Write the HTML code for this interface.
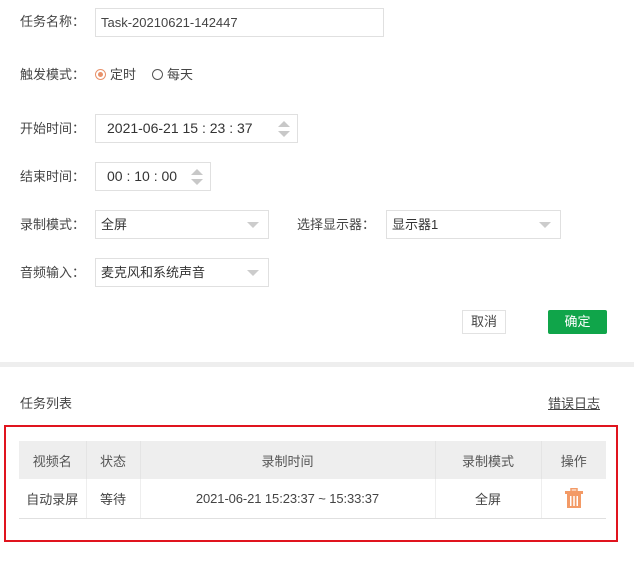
<!DOCTYPE html>
<html><head><meta charset="utf-8"><style>
*{margin:0;padding:0;box-sizing:border-box}
body{width:634px;height:575px;background:#fff;position:relative;overflow:hidden;font-family:"Liberation Sans","Noto Sans CJK SC",sans-serif;font-size:13px;color:#333}
.a{position:absolute}
.lbl{position:absolute;font-size:13px;color:#444;line-height:16px}
.box{position:absolute;border:1px solid #e0e0e0;background:#fff;font-size:13px;color:#333;line-height:27px;padding-left:8px}
.arr{position:absolute;right:9px;top:11px;width:0;height:0;border-left:6px solid transparent;border-right:6px solid transparent;border-top:6px solid #cccccc}
.spin{position:absolute;right:6px;top:5px}
table{border-collapse:collapse;position:absolute;left:19px;top:441px;width:587px;font-size:13px;color:#444}
th{background:#eeeeee;font-weight:normal;height:38px;border-left:1px solid #e4e4e4;color:#555}
td{height:39px;text-align:center;border-bottom:1px solid #e0e0e0;border-left:1px solid #eee}
th:first-child,td:first-child{border-left:none}
</style></head><body>
<div class="lbl" style="left:20px;top:14px">任务名称：</div>
<div class="box" style="left:95px;top:8px;width:289px;height:29px;line-height:27px;padding-left:5px;color:#444">Task-20210621-142447</div>

<div class="lbl" style="left:20px;top:67px">触发模式：</div>
<div class="a" style="left:95px;top:69px;width:11px;height:11px;border:1px solid #e8916a;border-radius:50%"><div style="position:absolute;left:2px;top:2px;width:5px;height:5px;border-radius:50%;background:#e8916a"></div></div>
<div class="lbl" style="left:110px;top:67px">定时</div>
<div class="a" style="left:152px;top:69px;width:11px;height:11px;border:1px solid #555;border-radius:50%"></div>
<div class="lbl" style="left:167px;top:67px">每天</div>

<div class="lbl" style="left:20px;top:121px">开始时间：</div>
<div class="box" style="left:95px;top:114px;width:203px;height:29px;padding-left:11px;font-size:14px">2021-06-21 15 : 23 : 37
<svg class="spin" width="14" height="18" viewBox="0 0 14 18"><path d="M1 7L7 1L13 7Z" fill="#c8c8c8"/><path d="M1 11L7 17L13 11Z" fill="#c8c8c8"/></svg></div>

<div class="lbl" style="left:20px;top:169px">结束时间：</div>
<div class="box" style="left:95px;top:162px;width:116px;height:29px;padding-left:11px;font-size:14px">00 : 10 : 00
<svg class="spin" width="14" height="18" viewBox="0 0 14 18"><path d="M1 7L7 1L13 7Z" fill="#c8c8c8"/><path d="M1 11L7 17L13 11Z" fill="#c8c8c8"/></svg></div>

<div class="lbl" style="left:20px;top:217px">录制模式：</div>
<div class="box" style="left:95px;top:210px;width:174px;height:29px;padding-left:5px">全屏<div class="arr"></div></div>
<div class="lbl" style="left:297px;top:217px">选择显示器：</div>
<div class="box" style="left:386px;top:210px;width:175px;height:29px;padding-left:5px">显示器1<div class="arr"></div></div>

<div class="lbl" style="left:20px;top:265px">音频输入：</div>
<div class="box" style="left:95px;top:258px;width:174px;height:29px;padding-left:5px">麦克风和系统声音<div class="arr"></div></div>

<div class="a" style="left:462px;top:310px;width:44px;height:24px;border:1px solid #e2e2e2;text-align:center;line-height:22px;font-size:13px;color:#444">取消</div>
<div class="a" style="left:548px;top:310px;width:59px;height:24px;background:#10a54a;border-radius:2px;text-align:center;line-height:24px;font-size:13px;color:#fff">确定</div>

<div class="a" style="left:0;top:362px;width:634px;height:5px;background:#eeeeee"></div>

<div class="lbl" style="left:20px;top:396px">任务列表</div>
<div class="lbl" style="left:548px;top:396px;text-decoration:underline">错误日志</div>

<div class="a" style="left:4px;top:425px;width:614px;height:117px;border:2px solid #e0141e"></div>
<table>
<colgroup><col style="width:67px"><col style="width:54px"><col style="width:295px"><col style="width:106px"><col style="width:65px"></colgroup>
<tr><th>视频名</th><th>状态</th><th>录制时间</th><th>录制模式</th><th>操作</th></tr>
<tr><td>自动录屏</td><td>等待</td><td style="font-size:13px;letter-spacing:-0.1px">2021-06-21 15:23:37 ~ 15:33:37</td><td>全屏</td><td>
<svg width="18" height="20" viewBox="0 0 18 20" style="vertical-align:middle"><rect x="6" y="0.75" width="6" height="2.5" fill="none" stroke="#f39a66" stroke-width="1.5"/><rect x="0" y="3" width="18" height="3" fill="#f39a66"/><path d="M2 6H16V20H2Z" fill="#f39a66"/><rect x="5" y="8" width="1.5" height="10" fill="#fff"/><rect x="8.25" y="8" width="1.5" height="10" fill="#fff"/><rect x="11.5" y="8" width="1.5" height="10" fill="#fff"/></svg></td></tr>
</table>
</body></html>
